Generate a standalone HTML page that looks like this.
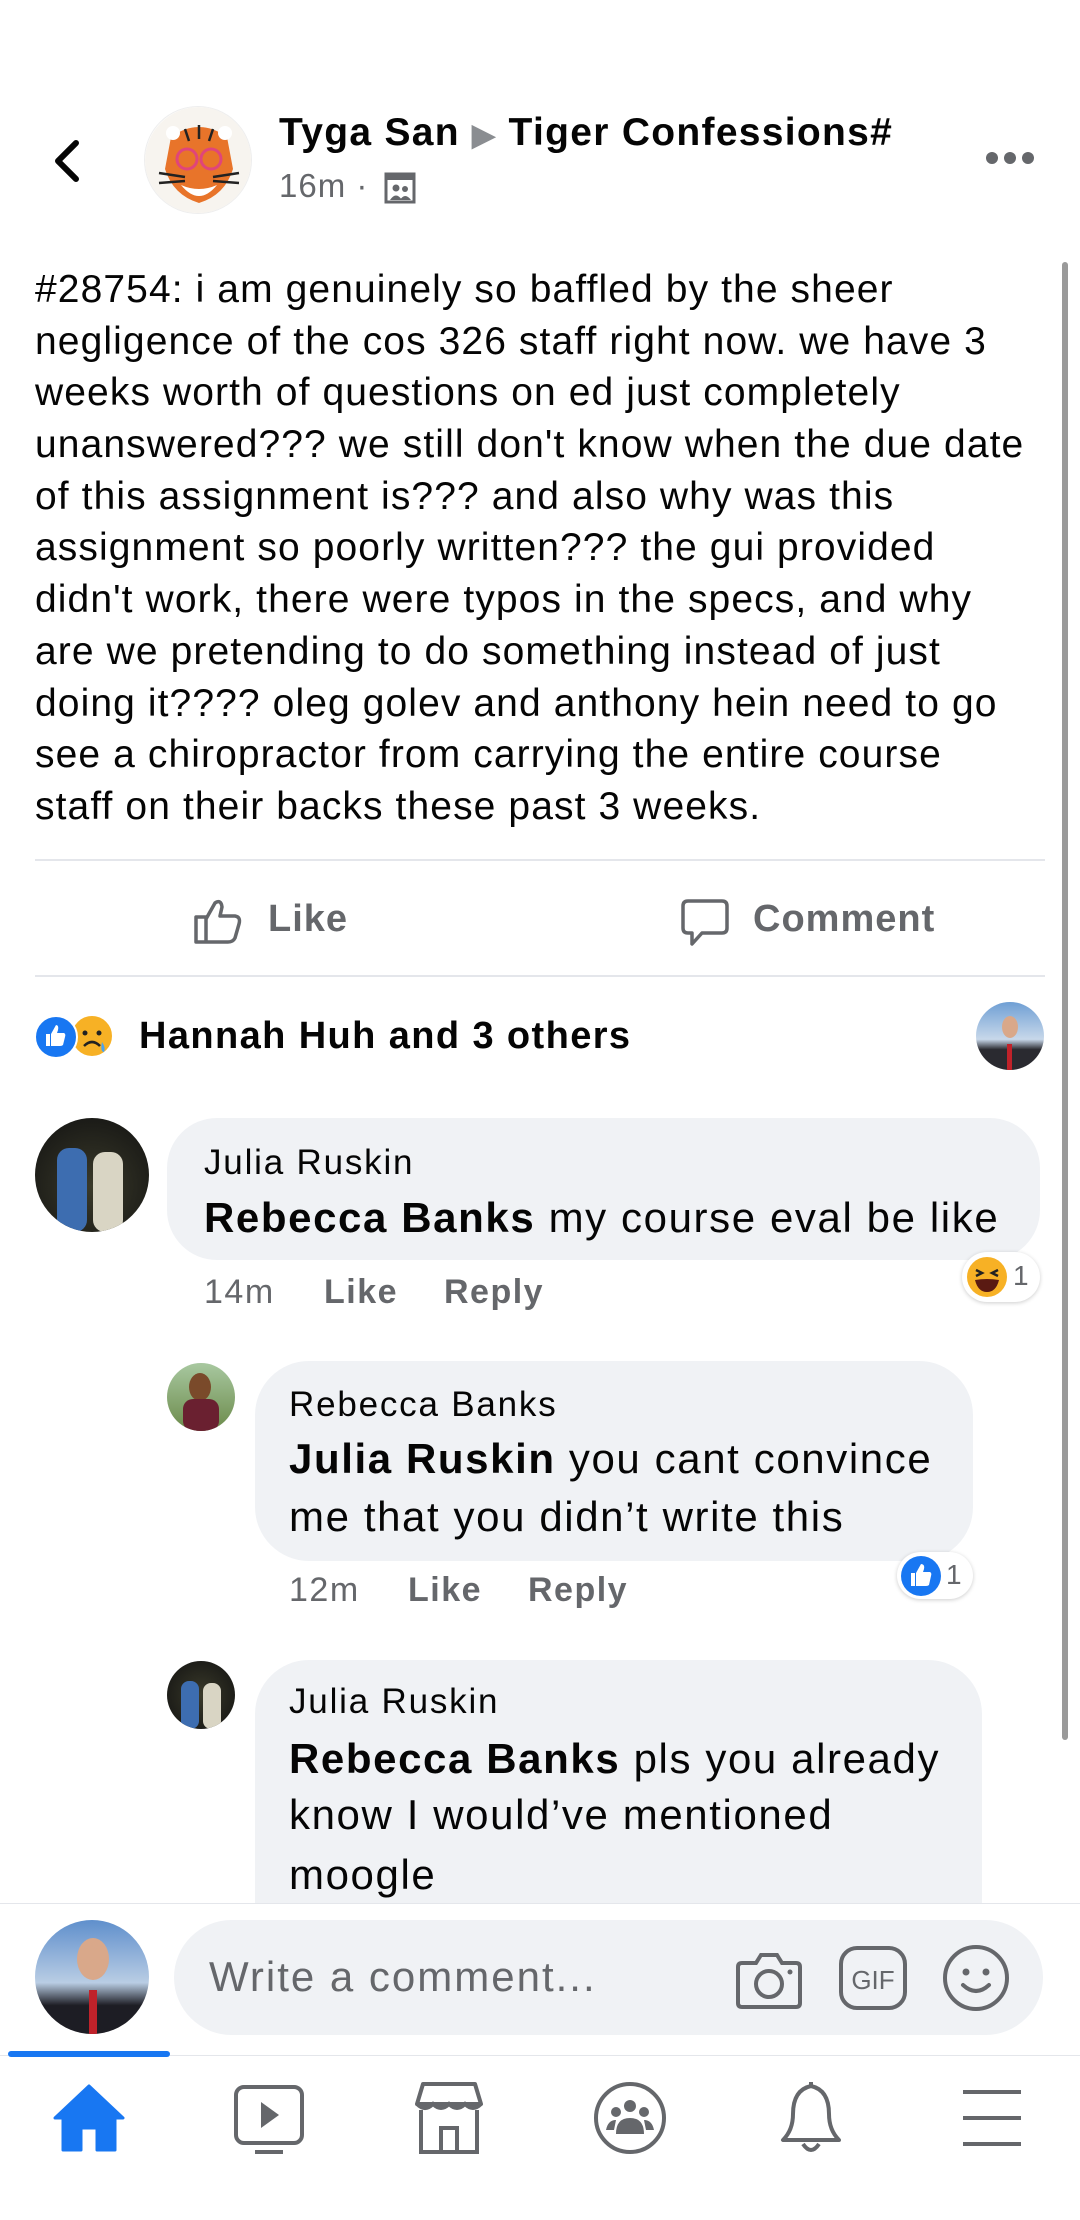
<!DOCTYPE html>
<html><head><meta charset="utf-8"><style>
*{margin:0;padding:0;box-sizing:border-box}
body{width:1080px;height:2220px;background:#fff;position:relative;overflow:hidden;font-family:"Liberation Sans",Arial,sans-serif;color:#050505}
.a{position:absolute;white-space:nowrap}
.post div{height:51.7px;line-height:51.7px;font-size:39px;letter-spacing:1.1px}
.g{color:#65676b}
.b{font-weight:bold}
.bub{position:absolute;background:#f0f2f5;border-radius:50px}
.av{position:absolute;border-radius:50%;overflow:hidden}
.meta{font-size:34px;color:#65676b;font-weight:bold;letter-spacing:1.5px}
.nm{font-size:35px;line-height:40px;letter-spacing:1.8px}
.tx{font-size:42px;line-height:46px;letter-spacing:1.6px}
</style></head><body>

<!-- header -->
<svg class="a" style="left:50px;top:138px" width="34" height="46" viewBox="0 0 34 46"><path d="M26 5 L8 23 L26 41" fill="none" stroke="#050505" stroke-width="6" stroke-linecap="round" stroke-linejoin="round"/></svg>
<div class="av" style="left:144px;top:106px;width:108px;height:108px;background:#fff;border:1px solid #eee">
<svg width="108" height="108" viewBox="0 0 108 108"><circle cx="54" cy="54" r="54" fill="#f7f4ef"/><path d="M26 30 Q54 10 82 30 L88 62 Q80 88 54 96 Q28 88 20 62 Z" fill="#e8742a"/><path d="M36 78 Q54 100 72 78 Q54 86 36 78" fill="#fff"/><circle cx="42" cy="52" r="10" fill="none" stroke="#e0457a" stroke-width="3"/><circle cx="66" cy="52" r="10" fill="none" stroke="#e0457a" stroke-width="3"/><path d="M40 22 L44 34 M54 18 L54 32 M68 22 L64 34 M14 66 L40 70 M14 76 L40 74 M94 66 L68 70 M94 76 L68 74" stroke="#222" stroke-width="2.5"/><circle cx="28" cy="26" r="7" fill="#fff"/><circle cx="80" cy="26" r="7" fill="#fff"/></svg></div>
<div class="a b" style="left:279px;top:110px;font-size:39px;line-height:46px;letter-spacing:1.3px">Tyga San <span style="color:#8a8d91;font-size:30px">&#9654;</span> Tiger Confessions#</div>
<div class="a g" style="left:279px;top:166px;font-size:33px;line-height:40px;letter-spacing:1px">16m · </div>
<svg class="a" style="left:384px;top:172px" width="32" height="32" viewBox="0 0 32 32"><rect x="2" y="2" width="28" height="28" fill="none" stroke="#65676b" stroke-width="3"/><rect x="2" y="2" width="28" height="6" fill="#65676b"/><circle cx="12" cy="16" r="3.5" fill="#65676b"/><circle cx="21" cy="17" r="3" fill="#65676b"/><path d="M6 28 Q12 19 18 28 Z M16 28 Q21 20 27 28Z" fill="#65676b"/></svg>
<svg class="a" style="left:984px;top:150px" width="52" height="16"><circle cx="8" cy="8" r="6" fill="#65676b"/><circle cx="26" cy="8" r="6" fill="#65676b"/><circle cx="44" cy="8" r="6" fill="#65676b"/></svg>

<!-- scrollbar -->
<div class="a" style="left:1062px;top:262px;width:6px;height:1478px;background:#9a9a9a;border-radius:3px"></div>

<!-- post text -->
<div class="a post" style="left:35px;top:264px">
<div>#28754: i am genuinely so baffled by the sheer</div>
<div>negligence of the cos 326 staff right now. we have 3</div>
<div>weeks worth of questions on ed just completely</div>
<div>unanswered??? we still don't know when the due date</div>
<div>of this assignment is??? and also why was this</div>
<div>assignment so poorly written??? the gui provided</div>
<div>didn't work, there were typos in the specs, and why</div>
<div>are we pretending to do something instead of just</div>
<div>doing it???? oleg golev and anthony hein need to go</div>
<div>see a chiropractor from carrying the entire course</div>
<div>staff on their backs these past 3 weeks.</div>
</div>

<div class="a" style="left:35px;top:859px;width:1010px;height:2px;background:#e4e6eb"></div>
<svg class="a" style="left:193px;top:897px" width="50" height="48" viewBox="0 0 50 48"><path d="M3 20 H13 V45 H3 Z M13 22 L22 6 Q28 2 29 10 L27 19 H42 Q48 20 46 27 L42 41 Q40 45 35 45 H13" fill="none" stroke="#65676b" stroke-width="3.5" stroke-linejoin="round"/></svg>
<div class="a b g" style="left:268px;top:897px;font-size:38px;line-height:44px;letter-spacing:1px">Like</div>
<svg class="a" style="left:680px;top:898px" width="50" height="52" viewBox="0 0 50 52"><path d="M8 3 H42 Q47 3 47 8 V30 Q47 35 42 35 H22 L12 46 V35 H8 Q3 35 3 30 V8 Q3 3 8 3 Z" fill="none" stroke="#65676b" stroke-width="3.5" stroke-linejoin="round"/></svg>
<div class="a b g" style="left:753px;top:897px;font-size:38px;line-height:44px;letter-spacing:1px">Comment</div>
<div class="a" style="left:35px;top:975px;width:1010px;height:2px;background:#e4e6eb"></div>

<!-- reactions -->
<svg class="a" style="left:34px;top:1014px" width="96" height="46" viewBox="0 0 96 46"><circle cx="58" cy="22" r="21" fill="#f7b125" stroke="#fff" stroke-width="2"/><circle cx="51" cy="19" r="2.5" fill="#222"/><circle cx="65" cy="19" r="2.5" fill="#222"/><path d="M50 32 Q58 24 66 32" stroke="#222" stroke-width="2.5" fill="none"/><path d="M68 28 Q72 34 70 38 Q66 38 68 28" fill="#4aa3f0"/><circle cx="22" cy="23" r="21" fill="#1877f2" stroke="#fff" stroke-width="2"/><path d="M12 20 H16 V32 H12Z M17 20 L22 11 Q25 11 24 16 L23 19 H30 Q32 20 31 23 L29 31 Q28 32 26 32 H17Z" fill="#fff"/></svg>
<div class="a b" style="left:139px;top:1013px;font-size:38px;line-height:46px;letter-spacing:1.4px">Hannah Huh and 3 others</div>
<div class="av" style="left:976px;top:1002px;width:68px;height:68px;background:linear-gradient(#6f9fd4,#c8d8ea 55%,#2a2a30 70%)"><div style="position:absolute;left:26px;top:14px;width:16px;height:22px;border-radius:50%;background:#d9a88a"></div><div style="position:absolute;left:31px;top:42px;width:5px;height:26px;background:#c0222a"></div></div>

<!-- comment 1 -->
<div class="av" style="left:35px;top:1118px;width:114px;height:114px;background:radial-gradient(circle at 50% 60%,#3a3a2a,#111)"><div style="position:absolute;left:22px;top:30px;width:30px;height:84px;background:#3d6db0;border-radius:12px"></div><div style="position:absolute;left:58px;top:34px;width:30px;height:80px;background:#d9d5c4;border-radius:12px"></div></div>
<div class="bub" style="left:167px;top:1118px;width:873px;height:142px"></div>
<div class="a nm" style="left:204px;top:1143px">Julia Ruskin</div>
<div class="a tx" style="left:204px;top:1195px"><b>Rebecca Banks</b> my course eval be like</div>
<div class="a meta" style="left:204px;top:1272px;line-height:40px"><span style="font-weight:normal">14m</span></div>
<div class="a meta" style="left:324px;top:1272px;line-height:40px">Like</div>
<div class="a meta" style="left:444px;top:1272px;line-height:40px">Reply</div>
<div class="a" style="left:962px;top:1252px;width:78px;height:50px;background:#fff;border-radius:25px;box-shadow:0 1px 4px rgba(0,0,0,.2)"></div>
<svg class="a" style="left:966px;top:1256px" width="42" height="42" viewBox="0 0 42 42"><circle cx="21" cy="21" r="20" fill="#f7b125"/><path d="M10 14 L16 17 L10 20 M32 14 L26 17 L32 20" stroke="#222" stroke-width="2.5" fill="none"/><path d="M9 24 Q21 22 33 24 Q30 36 21 36 Q12 36 9 24Z" fill="#5a1a12"/></svg>
<div class="a" style="left:1013px;top:1258px;font-size:28px;line-height:36px;color:#65676b">1</div>

<!-- reply 1 -->
<div class="av" style="left:167px;top:1363px;width:68px;height:68px;background:linear-gradient(#a8c8a0,#6b8a4a)"><div style="position:absolute;left:22px;top:10px;width:22px;height:28px;border-radius:50%;background:#7a4a2a"></div><div style="position:absolute;left:16px;top:36px;width:36px;height:32px;background:#6a2030;border-radius:10px"></div></div>
<div class="bub" style="left:255px;top:1361px;width:718px;height:200px;border-radius:54px"></div>
<div class="a nm" style="left:289px;top:1385px">Rebecca Banks</div>
<div class="a tx" style="left:289px;top:1436px"><b>Julia Ruskin</b> you cant convince</div>
<div class="a tx" style="left:289px;top:1494px">me that you didn’t write this</div>
<div class="a meta" style="left:289px;top:1570px;line-height:40px"><span style="font-weight:normal">12m</span></div>
<div class="a meta" style="left:408px;top:1570px;line-height:40px">Like</div>
<div class="a meta" style="left:528px;top:1570px;line-height:40px">Reply</div>
<div class="a" style="left:897px;top:1552px;width:76px;height:47px;background:#fff;border-radius:24px;box-shadow:0 1px 4px rgba(0,0,0,.2)"></div>
<svg class="a" style="left:900px;top:1555px" width="42" height="42" viewBox="0 0 42 42"><circle cx="21" cy="21" r="20" fill="#1877f2"/><path d="M11 18 H15 V31 H11Z M16 18 L21 9 Q25 9 24 14 L23 17 H30 Q32 18 31 21 L29 30 Q28 31 26 31 H16Z" fill="#fff"/></svg>
<div class="a" style="left:946px;top:1557px;font-size:28px;line-height:36px;color:#65676b">1</div>

<!-- reply 2 -->
<div class="av" style="left:167px;top:1661px;width:68px;height:68px;background:radial-gradient(circle,#3a3a2a,#111)"><div style="position:absolute;left:14px;top:20px;width:18px;height:48px;background:#3d6db0;border-radius:8px"></div><div style="position:absolute;left:36px;top:22px;width:18px;height:46px;background:#d9d5c4;border-radius:8px"></div></div>
<div class="bub" style="left:255px;top:1660px;width:727px;height:300px;border-radius:54px"></div>
<div class="a nm" style="left:289px;top:1682px">Julia Ruskin</div>
<div class="a tx" style="left:289px;top:1736px"><b>Rebecca Banks</b> pls you already</div>
<div class="a tx" style="left:289px;top:1792px">know I would’ve mentioned</div>
<div class="a tx" style="left:289px;top:1852px">moogle</div>

<!-- composer -->
<div class="a" style="left:0;top:1903px;width:1080px;height:317px;background:#fff;border-top:1px solid #e4e6eb"></div>
<div class="av" style="left:35px;top:1920px;width:114px;height:114px;background:linear-gradient(#5f8fcc,#b9cde4 55%,#1d1d24 75%)"><div style="position:absolute;left:42px;top:18px;width:32px;height:42px;border-radius:50%;background:#d9a88a"></div><div style="position:absolute;left:54px;top:70px;width:8px;height:44px;background:#c0222a"></div></div>
<div class="a" style="left:174px;top:1920px;width:869px;height:115px;background:#f0f2f5;border-radius:58px"></div>
<div class="a g" style="left:209px;top:1953px;font-size:42px;line-height:48px;letter-spacing:2px">Write a comment...</div>
<svg class="a" style="left:734px;top:1943px" width="70" height="70" viewBox="0 0 70 70"><path d="M8 20 H22 L27 12 H43 L48 20 H62 Q66 20 66 24 V60 Q66 64 62 64 H8 Q4 64 4 60 V24 Q4 20 8 20Z" fill="none" stroke="#65676b" stroke-width="4"/><circle cx="35" cy="41" r="13" fill="none" stroke="#65676b" stroke-width="4"/><circle cx="56" cy="29" r="2.5" fill="#65676b"/></svg>
<svg class="a" style="left:838px;top:1945px" width="70" height="66" viewBox="0 0 70 66"><rect x="3" y="3" width="64" height="60" rx="16" fill="none" stroke="#65676b" stroke-width="4"/><text x="35" y="44" text-anchor="middle" font-family="Liberation Sans" font-size="26" fill="#65676b">GIF</text></svg>
<svg class="a" style="left:942px;top:1944px" width="68" height="68" viewBox="0 0 68 68"><circle cx="34" cy="34" r="31" fill="none" stroke="#65676b" stroke-width="4"/><circle cx="24" cy="28" r="3.5" fill="#65676b"/><circle cx="44" cy="28" r="3.5" fill="#65676b"/><path d="M21 41 Q34 53 47 41" fill="none" stroke="#65676b" stroke-width="4" stroke-linecap="round"/></svg>

<div class="a" style="left:0;top:2055px;width:1080px;height:1px;background:#e4e6eb"></div>
<div class="a" style="left:8px;top:2051px;width:162px;height:6px;background:#1877f2;border-radius:3px"></div>

<!-- nav -->
<svg class="a" style="left:53px;top:2082px" width="72" height="72" viewBox="0 0 72 72"><path d="M36 4 L70 36 L62 36 V68 H44 V46 H28 V68 H10 V36 H2 Z" fill="#1877f2" stroke="#1877f2" stroke-width="3" stroke-linejoin="round"/></svg>
<svg class="a" style="left:233px;top:2084px" width="72" height="72" viewBox="0 0 72 72"><rect x="3" y="3" width="66" height="56" rx="8" fill="none" stroke="#65676b" stroke-width="4"/><path d="M28 18 L46 31 L28 44Z" fill="#65676b"/><path d="M22 68 H50" stroke="#65676b" stroke-width="4"/></svg>
<svg class="a" style="left:413px;top:2080px" width="72" height="76" viewBox="0 0 72 76"><path d="M10 4 H62 L68 24 H4 Z" fill="none" stroke="#65676b" stroke-width="4" stroke-linejoin="round"/><path d="M4 24 Q12 32 20 24 Q28 32 36 24 Q44 32 52 24 Q60 32 68 24" fill="none" stroke="#65676b" stroke-width="4"/><path d="M8 30 V72 H64 V30 M28 72 V48 H44 V72" fill="none" stroke="#65676b" stroke-width="4"/></svg>
<svg class="a" style="left:592px;top:2080px" width="76" height="76" viewBox="0 0 76 76"><circle cx="38" cy="38" r="34" fill="none" stroke="#65676b" stroke-width="4"/><circle cx="38" cy="26" r="6" fill="#65676b"/><circle cx="24" cy="32" r="5" fill="#65676b"/><circle cx="52" cy="32" r="5" fill="#65676b"/><path d="M24 54 Q24 38 38 38 Q52 38 52 54Z M14 50 Q16 40 24 40 L22 50Z M62 50 Q60 40 52 40 L54 50Z" fill="#65676b"/></svg>
<svg class="a" style="left:777px;top:2080px" width="68" height="78" viewBox="0 0 68 78"><path d="M34 6 Q16 10 16 34 Q16 50 6 60 H62 Q52 50 52 34 Q52 10 34 6Z" fill="none" stroke="#65676b" stroke-width="4" stroke-linejoin="round"/><path d="M26 64 Q34 76 42 64" fill="none" stroke="#65676b" stroke-width="4"/><path d="M34 2 V6" stroke="#65676b" stroke-width="4"/></svg>
<svg class="a" style="left:961px;top:2088px" width="62" height="60" viewBox="0 0 62 60"><path d="M2 4 H60 M2 30 H60 M2 56 H60" stroke="#65676b" stroke-width="4"/></svg>

</body></html>
